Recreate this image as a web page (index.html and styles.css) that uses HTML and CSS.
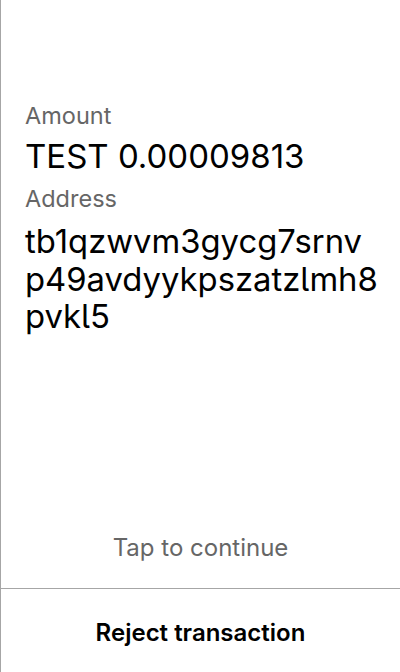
FILE: index.html
```html
<!DOCTYPE html>
<html>
<head>
<meta charset="utf-8">
<link rel="stylesheet" href="styles.css">
</head>
<body>
<div class="screen">
  <div class="content">
    <div class="label">Amount</div>
    <div class="value">TEST 0.00009813</div>
    <div class="label">Address</div>
    <div class="address">tb1qzwvm3gycg7srnvp49avdyykpszatzlmh8pvkl5</div>
  </div>
  <div class="tap">Tap to continue</div>
  <div class="reject">Reject transaction</div>
</div>
</body>
</html>
```
FILE: styles.css
```css
html, body {
  margin: 0;
  padding: 0;
  background: #fff;
}
body {
  font-family: Inter, "Noto Sans", sans-serif;
  font-feature-settings: "cv05";
  color: #000;
}
.screen {
  box-sizing: border-box;
  width: 400px;
  height: 672px;
  border-left: 1px solid #a6a6a6;
  display: flex;
  flex-direction: column;
}
.content {
  flex: 1;
  padding: 100px 19px 0 24px;
}
.label {
  font-size: 23.5px;
  line-height: 32px;
  color: #666;
}
.value {
  font-size: 33px;
  line-height: 44px;
  margin: 2px 0 5px;
}
.address {
  font-size: 32.8px;
  line-height: 37.5px;
  word-break: break-all;
  margin-top: 8px;
}
.tap {
  text-align: center;
  font-size: 24px;
  line-height: 28px;
  color: #666;
  padding-bottom: 26px;
}
.reject {
  flex: none;
  box-sizing: border-box;
  height: 84px;
  padding-top: 4px;
  border-top: 1px solid #a6a6a6;
  display: flex;
  align-items: center;
  justify-content: center;
  font-size: 24px;
  font-weight: 600;
}
```
